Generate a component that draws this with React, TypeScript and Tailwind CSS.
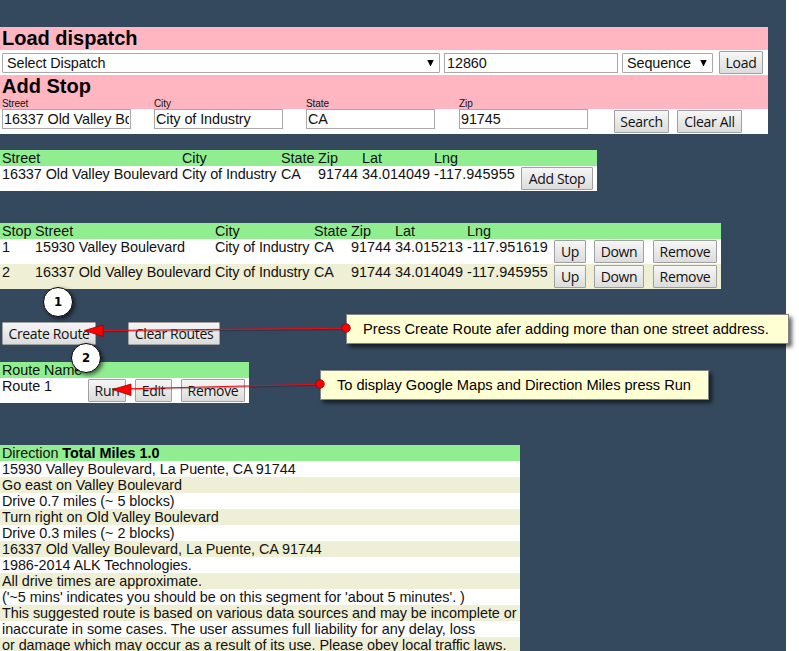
import type { ReactNode } from 'react';

function Btn({ children, className = '' }: { children: ReactNode; className?: string }) {
  return (
    <button
      type="button"
      className={`h-[23px] shrink-0 whitespace-nowrap rounded-[1px] border border-[#a0a0a0] bg-linear-to-b from-[#f6f6f6] to-[#dcdcdc] pt-px text-center font-['Open_Sans',sans-serif] text-[14px] leading-[20px] tracking-[-0.33px] text-[#111] ${className}`}
    >
      {children}
    </button>
  );
}

function Cell({ w, children }: { w: string; children?: ReactNode }) {
  return <div className={`${w} shrink-0 whitespace-nowrap`}>{children}</div>;
}

function Field({ label, value, className }: { label: string; value: string; className: string }) {
  return (
    <div className={`${className} shrink-0`}>
      <div className="h-[11px] text-[10px] leading-[11px] tracking-[-0.1px]">{label}</div>
      <div className="h-5 w-[129px] border border-[#a9a9a9] bg-white px-px">
        <div className="overflow-hidden whitespace-nowrap leading-[18px] tracking-[-0.08px]">{value}</div>
      </div>
    </div>
  );
}

function Select({ label, className }: { label: string; className: string }) {
  return (
    <div className={`${className} flex h-5 shrink-0 items-center justify-between rounded-[1px] border border-[#a9a9a9] bg-white pl-1 pr-[5px] leading-[18px] tracking-[-0.1px]`}>
      <span>{label}</span>
      <svg width="7" height="6" viewBox="0 0 7 6">
        <path d="M0.300 0H6.700L3.800 6H3.200Z" fill="#000" />
      </svg>
    </div>
  );
}

function Callout({ children, className }: { children: ReactNode; className: string }) {
  return (
    <div className={`absolute h-[30px] whitespace-nowrap border border-[#858585] bg-[#ffffd4] pl-4 text-[14.67px] leading-[28px] text-black shadow-[3px_3px_4px_rgba(0,0,0,0.6)] ${className}`}>
      {children}
    </div>
  );
}

function Marker({ children, className }: { children: ReactNode; className: string }) {
  return (
    <div className={`absolute h-[30px] w-[30px] rounded-full border-[1.5px] border-black bg-white text-center font-['DejaVu_Sans_Condensed','DejaVu_Sans',sans-serif] text-[13px] font-bold leading-[28px] text-black shadow-[2px_2px_4px_rgba(0,0,0,0.6)] ${className}`}>
      {children}
    </div>
  );
}

const stops = [
  { n: '1', street: '15930 Valley Boulevard', lat: '34.015213', lng: '-117.951619' },
  { n: '2', street: '16337 Old Valley Boulevard', lat: '34.014049', lng: '-117.945955' },
];

const directions = [
  '15930 Valley Boulevard, La Puente, CA 91744',
  'Go east on Valley Boulevard',
  'Drive 0.7 miles (~ 5 blocks)',
  'Turn right on Old Valley Boulevard',
  'Drive 0.3 miles (~ 2 blocks)',
  '16337 Old Valley Boulevard, La Puente, CA 91744',
  '1986-2014 ALK Technologies.',
  'All drive times are approximate.',
  "('~5 mins' indicates you should be on this segment for 'about 5 minutes'. )",
  'This suggested route is based on various data sources and may be incomplete or',
  'inaccurate in some cases. The user assumes full liability for any delay, loss',
  'or damage which may occur as a result of its use. Please obey local traffic laws.',
];

function LocationHead() {
  return (
    <>
      <Cell w="w-[180px]">Street</Cell>
      <Cell w="w-[99px]">City</Cell>
      <Cell w="w-[37px]">State</Cell>
      <Cell w="w-[44px]">Zip</Cell>
      <Cell w="w-[72px]">Lat</Cell>
      <Cell w="w-[87px]">Lng</Cell>
    </>
  );
}

function LocationCells({ street, lat, lng }: { street: string; lat: string; lng: string }) {
  return (
    <>
      <Cell w="w-[180px]">{street}</Cell>
      <Cell w="w-[99px] tracking-[-0.11px]">City of Industry</Cell>
      <Cell w="w-[37px]">CA</Cell>
      <Cell w="w-[44px] tracking-normal">91744</Cell>
      <Cell w="w-[72px] tracking-normal">{lat}</Cell>
      <Cell w="w-[87px] tracking-[0.1px]">{lng}</Cell>
    </>
  );
}

export default function App() {
  return (
    <div className="relative h-[651px] w-[799px] overflow-hidden bg-white font-['Liberation_Sans',Arial,sans-serif] text-[14.4px] leading-4 tracking-[-0.05px] text-[#111]">
      <div className="h-full w-[786px] bg-[#34495e] pt-[27px]">
        <section className="h-[107px] w-[768px] bg-white">
          <h2 className="h-[23px] bg-[#ffb6c1] pl-0.5 text-[20px] font-bold leading-[23px] tracking-normal text-black">Load dispatch</h2>
          <div className="flex h-[25px] items-start pl-0.5 pt-px">
            <Select label="Select Dispatch" className="mt-0.5 w-[438px]" />
            <div className="ml-1 mt-0.5 h-5 w-[174px] shrink-0 border border-[#a9a9a9] bg-white pl-0.5 leading-[18px]">12860</div>
            <Select label="Sequence" className="ml-1 mt-0.5 w-[91px]" />
            <Btn className="ml-1.5 w-11">Load</Btn>
          </div>
          <div className="h-[34px] bg-[#ffb6c1] pl-0.5">
            <h2 className="text-[20px] font-bold leading-[23px] tracking-normal text-black">Add Stop</h2>
            <div className="flex items-start">
              <Field label="Street" value="16337 Old Valley Boulevard" className="w-[152px]" />
              <Field label="City" value="City of Industry" className="w-[152px]" />
              <Field label="State" value="CA" className="w-[153px]" />
              <Field label="Zip" value="91745" className="w-[155px]" />
              <div className="flex gap-2 pt-3">
                <Btn className="w-[55px]">Search</Btn>
                <Btn className="w-[65px]">Clear All</Btn>
              </div>
            </div>
          </div>
        </section>

        <section className="mt-4 w-[597px]">
          <div className="flex h-4 bg-[#90ee90] pl-0.5">
            <LocationHead />
          </div>
          <div className="flex h-[25px] bg-white pl-0.5">
            <LocationCells street="16337 Old Valley Boulevard" lat="34.014049" lng="-117.945955" />
            <Btn className="mt-px w-[72px]">Add Stop</Btn>
          </div>
        </section>

        <section className="mt-8 w-[721px]">
          <div className="flex h-4 bg-[#90ee90] pl-0.5">
            <Cell w="w-[33px]">Stop</Cell>
            <LocationHead />
          </div>
          {stops.map((s) => (
            <div key={s.n} className="flex h-[25px] bg-white pl-0.5 odd:bg-[#efefd5]">
              <Cell w="w-[33px]">{s.n}</Cell>
              <LocationCells street={s.street} lat={s.lat} lng={s.lng} />
              <Btn className="mt-px w-8">Up</Btn>
              <Btn className="ml-2 mt-px w-[50px]">Down</Btn>
              <Btn className="ml-[9px] mt-px w-16">Remove</Btn>
            </div>
          ))}
        </section>

        <div className="mt-[33px] flex gap-8 pl-0.5">
          <Btn className="w-[94px]">Create Route</Btn>
          <Btn className="w-[92px]">Clear Routes</Btn>
        </div>

        <section className="mt-[17px] w-[249px]">
          <div className="h-4 bg-[#90ee90] pl-0.5">Route Name</div>
          <div className="flex h-[25px] bg-white pl-0.5">
            <Cell w="w-[86px]">Route 1</Cell>
            <Btn className="mt-px w-[38px]">Run</Btn>
            <Btn className="ml-[9px] mt-px w-[37px]">Edit</Btn>
            <Btn className="ml-[9px] mt-px w-16">Remove</Btn>
          </div>
        </section>

        <section className="mt-[42px] w-[520px]">
          <div className="h-4 bg-[#90ee90] pl-0.5">
            Direction <b className="tracking-normal text-black">Total Miles 1.0</b>
          </div>
          {directions.map((d) => (
            <div key={d} className="h-4 whitespace-nowrap bg-white pl-0.5 odd:bg-[#efefd5]">
              {d}
            </div>
          ))}
        </section>
      </div>

      <Callout className="left-[346px] top-[314px] w-[443px] tracking-normal">Press Create Route afer adding more than one street address.</Callout>
      <Callout className="left-[320px] top-[370px] w-[389px] tracking-[-0.04px]">To display Google Maps and Direction Miles press Run</Callout>
      <svg className="absolute left-0 top-0" width="799" height="651">
        <g stroke="#301020" strokeOpacity="0.3" strokeWidth="1.5">
          <path d="M103 331.500L346 329.500" />
          <path d="M131 389.500L320 385.300" />
        </g>
        <g stroke="#e80c14" strokeWidth="1.1">
          <path d="M101 330.500L346 328.300" />
          <path d="M129 388.700L320 384.300" />
        </g>
        <g fill="#f00" stroke="#900" strokeWidth="0.8">
          <path d="M84.500 330.500L103 325V336.500Z" />
          <path d="M112.500 389.500L131 384V395.500Z" />
          <circle cx="346" cy="328" r="4.300" />
          <circle cx="320" cy="384" r="4.300" />
        </g>
      </svg>
      <Marker className="left-[43px] top-[287px]">1</Marker>
      <Marker className="left-[71px] top-[343px]">2</Marker>
    </div>
  );
}
